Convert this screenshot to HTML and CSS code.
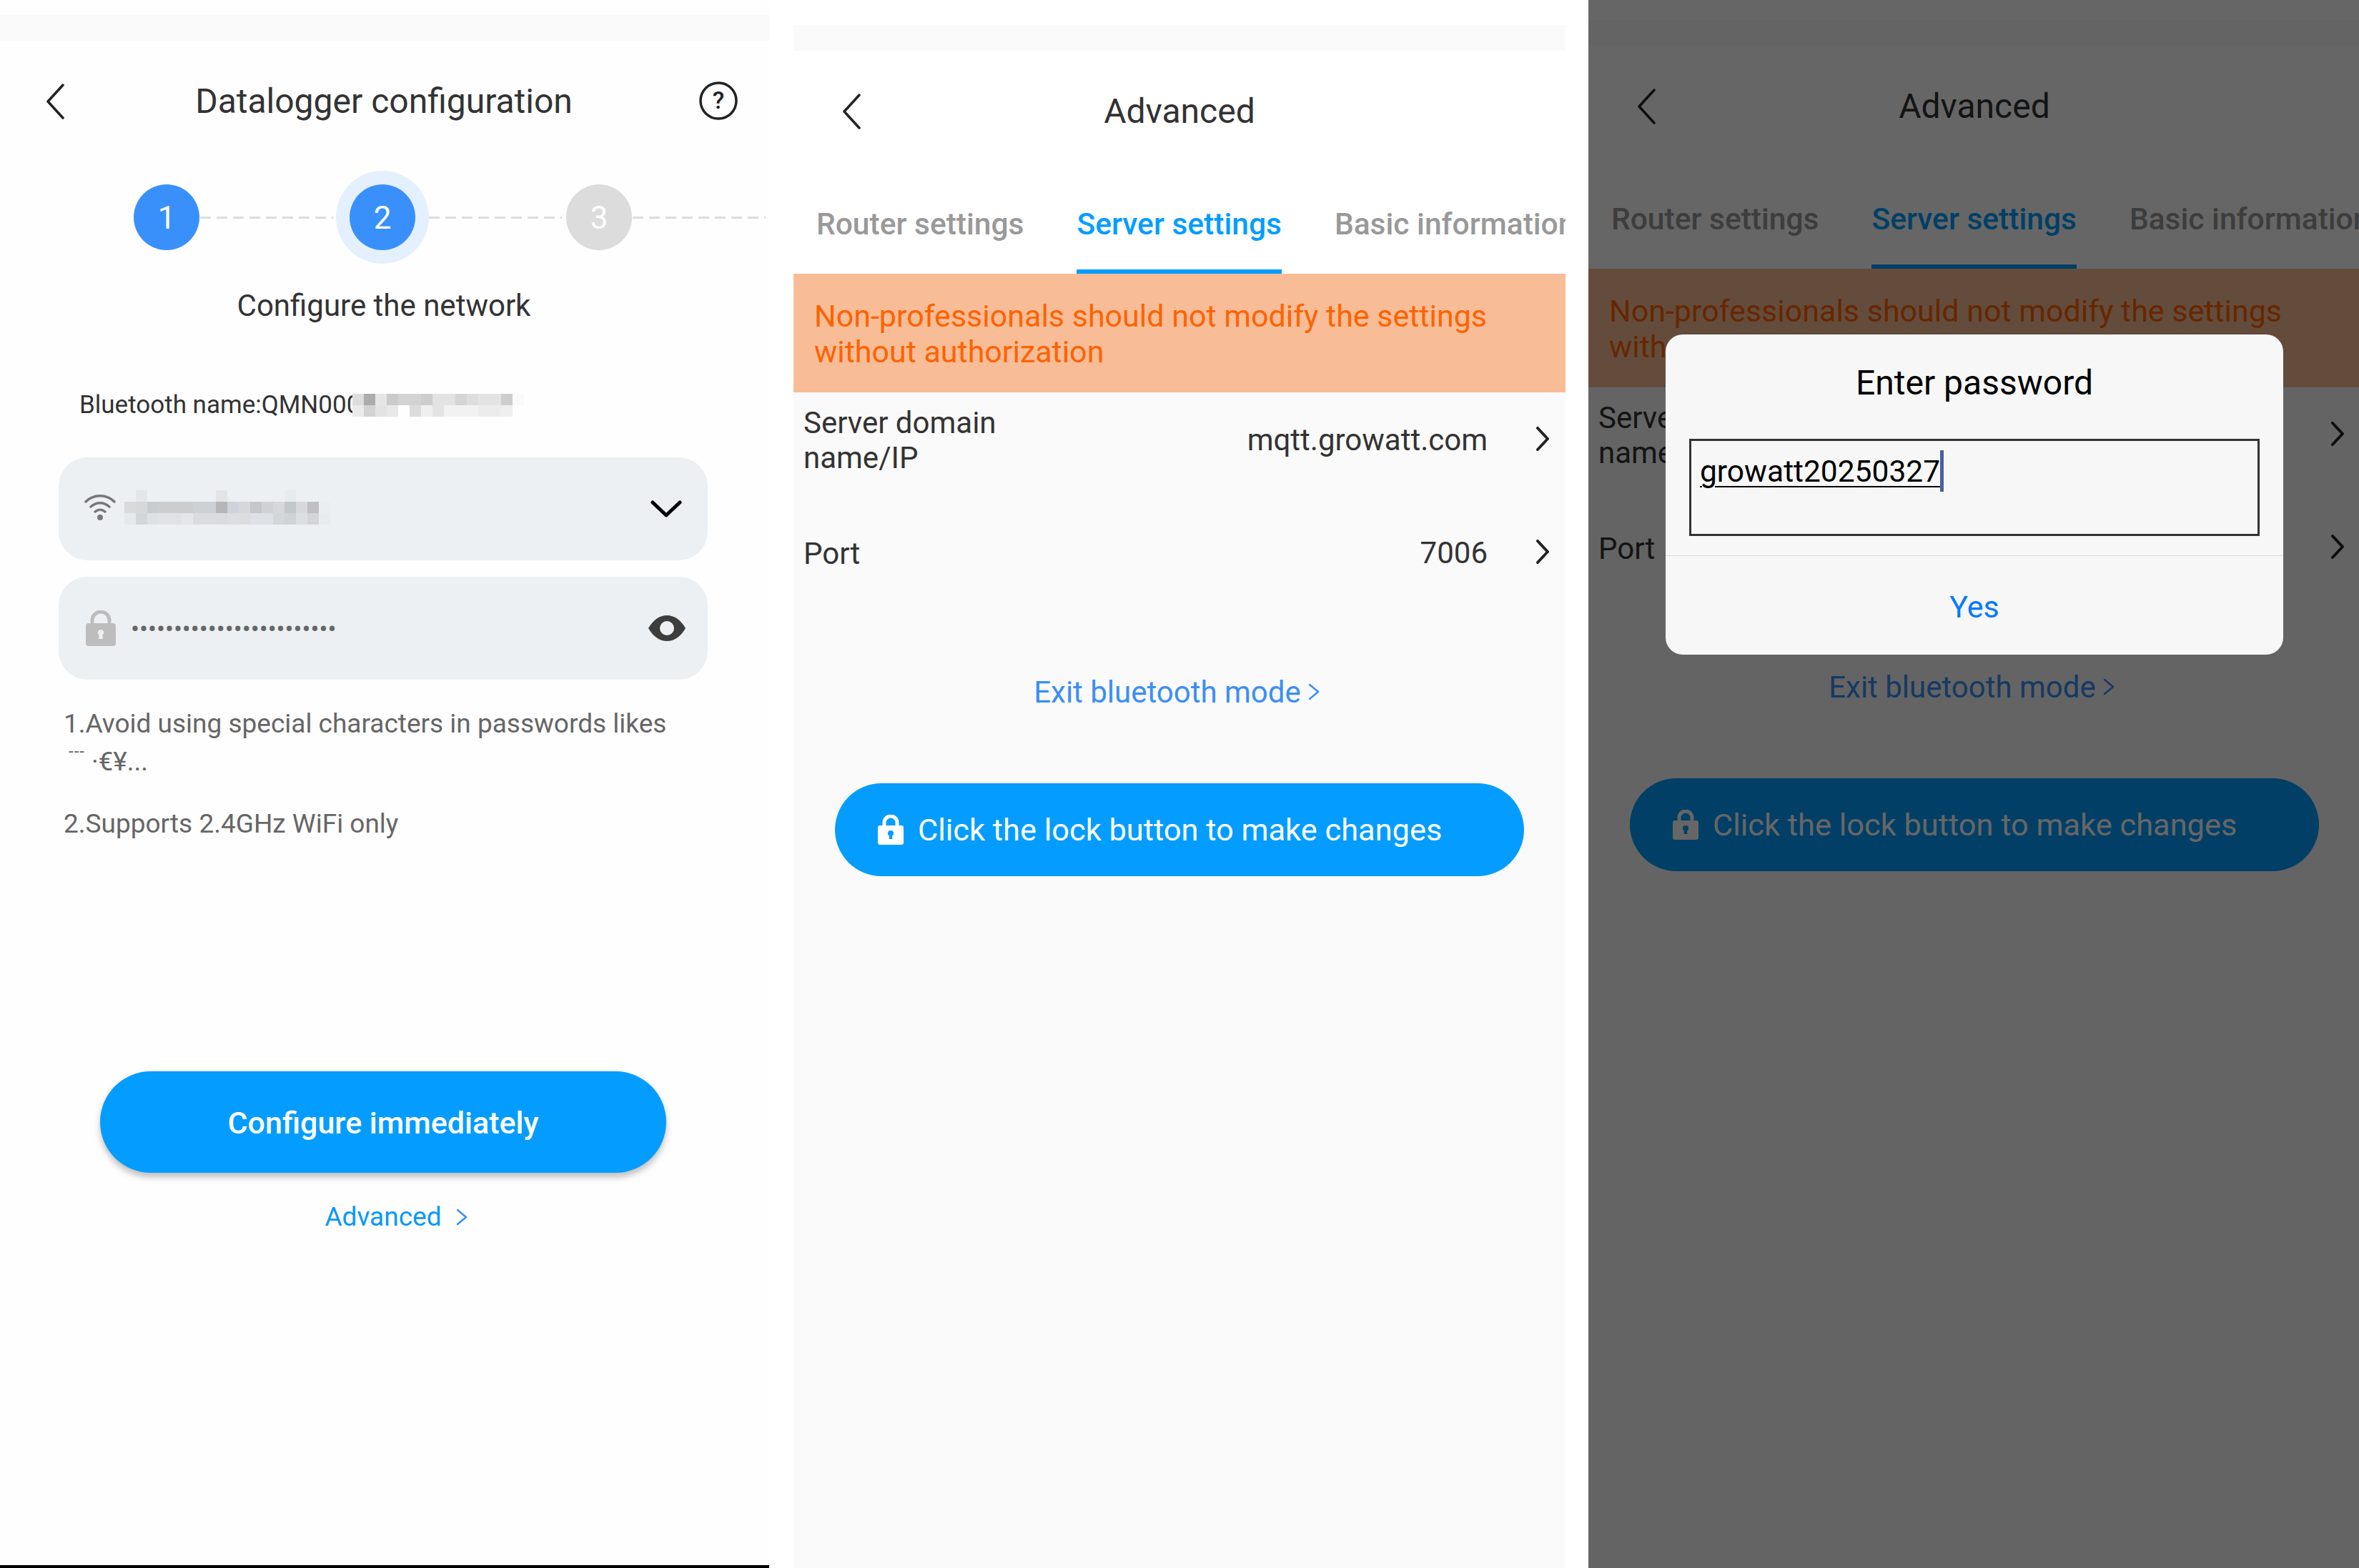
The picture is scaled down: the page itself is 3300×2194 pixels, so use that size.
FILE: index.html
```html
<!DOCTYPE html>
<html lang="en">
  <head>
    <meta charset="UTF-8" />
    <title>Datalogger configuration</title>
    <link rel="stylesheet" href="styles.css">
  </head>
  <body>
    <div class="screens">
      <!-- step 2 of the datalogger wizard -->
      <section class="screen config">
        <div class="status-strip"></div>
        <header class="topbar config-topbar">
          <svg class="back" viewBox="0 0 26 50"><path d="M24 2 3 25l21 23" /></svg>
          <h1>Datalogger configuration</h1>
          <svg class="help" viewBox="0 0 54 54">
            <circle cx="27" cy="27" r="25" />
            <text x="27" y="38" text-anchor="middle">?</text>
          </svg>
        </header>

        <div class="steps">
          <span class="step done">1</span>
          <span class="dash dash-a"></span>
          <span class="halo"><span class="step done">2</span></span>
          <span class="dash dash-b"></span>
          <span class="step todo">3</span>
          <span class="dash dash-c"></span>
        </div>
        <p class="step-label">Configure the network</p>

        <p class="bt-name">
          Bluetooth name:QMN000
          <svg class="bt-mosaic" width="240" height="32" shape-rendering="crispEdges">
            <rect x="0" y="0" width="16" height="16" fill="#ddd" />
            <rect x="16" y="0" width="16" height="16" fill="#adadad" />
            <rect x="32" y="0" width="16" height="16" fill="#e6e6e6" />
            <rect x="48" y="0" width="16" height="16" fill="#cacaca" />
            <rect x="64" y="0" width="32" height="16" fill="#d3d3d3" />
            <rect x="96" y="0" width="16" height="16" fill="#cdcdcd" />
            <rect x="112" y="0" width="32" height="16" fill="#e3e3e3" />
            <rect x="144" y="0" width="16" height="16" fill="#d5d5d5" />
            <rect x="160" y="0" width="16" height="16" fill="#dedede" />
            <rect x="176" y="0" width="32" height="16" fill="#e3e3e3" />
            <rect x="208" y="0" width="16" height="16" fill="#cdcdcd" />
            <rect x="224" y="0" width="16" height="16" fill="#fafafa" />
            <rect x="0" y="16" width="16" height="16" fill="#ebebeb" />
            <rect x="16" y="16" width="16" height="16" fill="#d3d3d3" />
            <rect x="32" y="16" width="16" height="16" fill="#e3e3e3" />
            <rect x="48" y="16" width="16" height="16" fill="#e8e8e8" />
            <rect x="64" y="16" width="16" height="16" fill="#fefefe" />
            <rect x="80" y="16" width="16" height="16" fill="#dcdcdc" />
            <rect x="96" y="16" width="16" height="16" fill="#efefef" />
            <rect x="112" y="16" width="16" height="16" fill="#e3e3e3" />
            <rect x="128" y="16" width="48" height="16" fill="#f2f2f2" />
            <rect x="176" y="16" width="32" height="16" fill="#ececec" />
            <rect x="208" y="16" width="16" height="16" fill="#efefef" />
          </svg>
        </p>

        <div class="field">
          <svg class="wifi" viewBox="0 0 44 40">
            <path d="M2 13C13 2 31 2 42 13" />
            <path d="M9 20c8-7 18-7 26 0" />
            <path d="M15 27c5-4 9-4 14 0" />
            <circle cx="22" cy="35" r="4" />
          </svg>
          <svg class="ssid-mosaic" width="288" height="48" shape-rendering="crispEdges">
            <rect x="16" y="0" width="16" height="16" fill="#e3e7ea" />
            <rect x="128" y="0" width="16" height="16" fill="#e3e4e6" />
            <rect x="224" y="0" width="16" height="16" fill="#e7ebee" />
            <rect x="0" y="16" width="16" height="16" fill="#d9dadb" />
            <rect x="16" y="16" width="16" height="16" fill="#d5d9da" />
            <rect x="32" y="16" width="16" height="16" fill="#c8ccd0" />
            <rect x="48" y="16" width="48" height="16" fill="#cbcdcf" />
            <rect x="96" y="16" width="32" height="16" fill="#cdd1d4" />
            <rect x="128" y="16" width="16" height="16" fill="#b5b6b8" />
            <rect x="144" y="16" width="16" height="16" fill="#cdd3d8" />
            <rect x="160" y="16" width="16" height="16" fill="#d4d8da" />
            <rect x="176" y="16" width="16" height="16" fill="#c5c6c8" />
            <rect x="192" y="16" width="16" height="16" fill="#ced2d4" />
            <rect x="208" y="16" width="16" height="16" fill="#d6d8da" />
            <rect x="224" y="16" width="16" height="16" fill="#c3c8ca" />
            <rect x="240" y="16" width="16" height="16" fill="#d6d8da" />
            <rect x="256" y="16" width="16" height="16" fill="#c0c0c2" />
            <rect x="272" y="16" width="16" height="16" fill="#ebeef0" />
            <rect x="0" y="32" width="16" height="16" fill="#e6e9ec" />
            <rect x="16" y="32" width="16" height="16" fill="#d3d7d8" />
            <rect x="32" y="32" width="16" height="16" fill="#dde1e4" />
            <rect x="48" y="32" width="16" height="16" fill="#dfe3e4" />
            <rect x="64" y="32" width="16" height="16" fill="#e0e2e4" />
            <rect x="80" y="32" width="16" height="16" fill="#e3e7e8" />
            <rect x="96" y="32" width="32" height="16" fill="#dadcde" />
            <rect x="128" y="32" width="16" height="16" fill="#d8dcdf" />
            <rect x="144" y="32" width="16" height="16" fill="#dcdee0" />
            <rect x="160" y="32" width="16" height="16" fill="#dadcde" />
            <rect x="176" y="32" width="32" height="16" fill="#dde0e4" />
            <rect x="208" y="32" width="16" height="16" fill="#d3d7da" />
            <rect x="224" y="32" width="16" height="16" fill="#d0d3d6" />
            <rect x="240" y="32" width="16" height="16" fill="#dadfe3" />
            <rect x="256" y="32" width="16" height="16" fill="#d3d5d7" />
            <rect x="272" y="32" width="16" height="16" fill="#e9ecef" />
          </svg>
          <svg class="field-end chevron-down" viewBox="0 0 44 24"><path d="M3 3l19 18L41 3" /></svg>
        </div>

        <div class="field password">
          <svg class="lock lock-grey" viewBox="0 0 42 50">
            <path class="shackle" d="M9 22V14a12 12 0 0 1 24 0v8" />
            <path d="M4 18h34a4 4 0 0 1 4 4v24a4 4 0 0 1-4 4H4a4 4 0 0 1-4-4V22a4 4 0 0 1 4-4z" />
            <circle class="keyhole" cx="21" cy="31" r="4" />
            <path class="keyhole" d="M19 32h4l1 8h-6z" />
          </svg>
          <span class="dots">••••••••••••••••••••••••</span>
          <svg class="field-end eye" viewBox="0 0 52 36">
            <path d="M0 18C7 6 16 0 26 0s19 6 26 18c-7 12-16 18-26 18S7 30 0 18z" />
            <circle cx="26" cy="18" r="10" />
          </svg>
        </div>

        <p class="hint hint-first">1.Avoid using special characters in passwords likes</p>
        <p class="hint hint-second"><span class="hint-mark">---</span><span class="hint-chars">·€¥...</span></p>
        <p class="hint hint-third">2.Supports 2.4GHz WiFi only</p>

        <div class="primary-btn config-btn">Configure immediately</div>
        <div class="advanced-link">
          Advanced
          <svg class="small-chevron" viewBox="0 0 16 24"><path d="M2 2l12 10L2 22" /></svg>
        </div>
        <div class="home-bar"></div>
      </section>

      <!-- advanced settings -->
      <section class="screen advanced">
        <div class="advanced-body">
          <div class="status-strip"></div>
          <header class="topbar">
            <svg class="back" viewBox="0 0 26 50"><path d="M24 2 3 25l21 23" /></svg>
            <h1>Advanced</h1>
          </header>
          <nav class="tabs">
            <span class="tab">Router settings</span>
            <span class="tab active">Server settings</span>
            <span class="tab">Basic information</span>
          </nav>
          <p class="warning">Non-professionals should not modify the settings<br />without authorization</p>
          <div class="row">
            <span class="row-label">Server domain<br />name/IP</span>
            <span class="row-value">mqtt.growatt.com</span>
            <svg class="row-chevron" viewBox="0 0 20 34"><path d="M3 2l14 15L3 32" /></svg>
          </div>
          <div class="row row-port">
            <span class="row-label">Port</span>
            <span class="row-value">7006</span>
            <svg class="row-chevron" viewBox="0 0 20 34"><path d="M3 2l14 15L3 32" /></svg>
          </div>
          <div class="exit-link">
            Exit bluetooth mode
            <svg class="small-chevron" viewBox="0 0 16 24"><path d="M2 2l12 10L2 22" /></svg>
          </div>
          <div class="primary-btn lock-btn">
            <svg class="lock lock-white" viewBox="0 0 36 42">
              <path class="shackle" d="M9 18V11a9 9 0 0 1 18 0v7" />
              <path d="M3 15h30a3 3 0 0 1 3 3v21a3 3 0 0 1-3 3H3a3 3 0 0 1-3-3V18a3 3 0 0 1 3-3z" />
              <circle class="keyhole" cx="18" cy="26" r="4" />
              <path class="keyhole" d="M16.500 27h3l1 7h-5z" />
            </svg>
            Click the lock button to make changes
          </div>
        </div>
      </section>

      <!-- same screen behind the password prompt -->
      <section class="screen advanced locked">
        <div class="advanced-body">
          <div class="status-strip"></div>
          <header class="topbar">
            <svg class="back" viewBox="0 0 26 50"><path d="M24 2 3 25l21 23" /></svg>
            <h1>Advanced</h1>
          </header>
          <nav class="tabs">
            <span class="tab">Router settings</span>
            <span class="tab active">Server settings</span>
            <span class="tab">Basic information</span>
          </nav>
          <p class="warning">Non-professionals should not modify the settings<br />without authorization</p>
          <div class="row">
            <span class="row-label">Server domain<br />name/IP</span>
            <span class="row-value">mqtt.growatt.com</span>
            <svg class="row-chevron" viewBox="0 0 20 34"><path d="M3 2l14 15L3 32" /></svg>
          </div>
          <div class="row row-port">
            <span class="row-label">Port</span>
            <span class="row-value">7006</span>
            <svg class="row-chevron" viewBox="0 0 20 34"><path d="M3 2l14 15L3 32" /></svg>
          </div>
          <div class="exit-link">
            Exit bluetooth mode
            <svg class="small-chevron" viewBox="0 0 16 24"><path d="M2 2l12 10L2 22" /></svg>
          </div>
          <div class="primary-btn lock-btn">
            <svg class="lock lock-white" viewBox="0 0 36 42">
              <path class="shackle" d="M9 18V11a9 9 0 0 1 18 0v7" />
              <path d="M3 15h30a3 3 0 0 1 3 3v21a3 3 0 0 1-3 3H3a3 3 0 0 1-3-3V18a3 3 0 0 1 3-3z" />
              <circle class="keyhole" cx="18" cy="26" r="4" />
              <path class="keyhole" d="M16.500 27h3l1 7h-5z" />
            </svg>
            Click the lock button to make changes
          </div>
        </div>
        <div class="scrim"></div>
        <div class="dialog">
          <h2>Enter password</h2>
          <div class="dialog-input"><span class="typed">growatt20250327</span><span class="caret"></span></div>
          <div class="dialog-action">Yes</div>
        </div>
      </section>
    </div>
  </body>
</html>
```

FILE: styles.css
```css
* {
  box-sizing: border-box;
}

html,
body {
  margin: 0;
  height: 100%;
  background-color: #fff;
  overflow: hidden;
}

body {
  font-family: Roboto, "Noto Sans", sans-serif;
  color: #333;
}

h1,
h2,
p {
  margin: 0;
  font-weight: 400;
}

svg {
  display: block;
  flex: none;
}

.screens {
  display: flex;
  height: 2194px;
}

.screen {
  position: relative;
  height: 100%;
  flex: none;
  overflow: hidden;
}

.status-strip {
  height: 36px;
  background-color: #fafafa;
}

/* header */
.topbar {
  display: grid;
  grid-template-columns: 1fr auto 1fr;
  align-items: center;
  height: 170px;
  padding: 0 68px;
}

.topbar h1 {
  grid-column: 2;
  grid-row: 1;
  font-size: 48px;
  line-height: 60px;
}

.back {
  grid-column: 1;
  grid-row: 1;
  width: 26px;
  height: 50px;
  fill: none;
  stroke: #222;
  stroke-width: 3.5;
  stroke-linecap: round;
  stroke-linejoin: round;
}

/* first screen */
.config {
  display: flex;
  flex-direction: column;
  width: 1076px;
  padding-top: 21px;
  background-color: #fefefe;
}

.config-topbar {
  padding: 0 46px 0 44px;
}

.config-topbar .back {
  margin-left: 20px;
}

.help {
  grid-column: 3;
  grid-row: 1;
  justify-self: end;
  width: 54px;
  height: 54px;
  margin: -2px -2px 0 0;
  fill: none;
  stroke: #222;
  stroke-width: 3.5;
}

.help text {
  fill: #222;
  stroke: none;
  font-size: 34px;
  font-weight: 500;
}

.steps {
  display: flex;
  align-items: center;
  height: 130px;
  margin-top: 12px;
  padding-left: 187px;
}

.step {
  display: flex;
  align-items: center;
  justify-content: center;
  width: 92px;
  height: 92px;
  flex: none;
  padding-top: 2px;
  border-radius: 50%;
  color: #fff;
  font-size: 44px;
}

.step.done {
  background-color: #3990fb;
}

.step.todo {
  background-color: #dcdcdc;
}

.halo {
  display: flex;
  align-items: center;
  justify-content: center;
  width: 130px;
  height: 130px;
  border-radius: 50%;
  background-color: #e4f0fe;
}

.dash {
  height: 3px;
  flex: none;
  background-image: repeating-linear-gradient(90deg, #ddd 0 15px, transparent 15px 23px);
}

.dash-a {
  width: 186px;
  margin: 0 4px 0 1px;
}

.dash-b {
  width: 186px;
  margin-right: 6px;
}

.dash-c {
  width: 186px;
  margin-left: 1px;
}

.step-label {
  margin: 34px 2px 0 0;
  font-size: 42px;
  line-height: 50px;
  text-align: center;
}

.bt-name {
  position: relative;
  margin: 89px 0 0 111px;
  font-size: 35px;
  line-height: 50px;
}

.bt-mosaic {
  position: absolute;
  left: 382px;
  top: 9px;
}

.field {
  display: flex;
  align-items: center;
  height: 144px;
  margin: 48px 86px 0 82px;
  padding: 0 30px 0 36px;
  border-radius: 40px;
  background-color: #ecf0f3;
}

.field.password {
  margin-top: 23px;
}

.wifi {
  width: 44px;
  height: 40px;
  margin-top: -6px;
  fill: none;
  stroke: #777;
  stroke-width: 3.5;
  stroke-linecap: round;
}

.wifi circle {
  fill: #777;
  stroke: none;
}

.ssid-mosaic {
  margin: -4px 0 0 12px;
}

.field-end {
  margin-left: auto;
}

.chevron-down {
  width: 44px;
  height: 24px;
  margin-right: 6px;
  fill: none;
  stroke: #000;
  stroke-width: 5;
  stroke-linecap: round;
  stroke-linejoin: round;
}

.lock {
  fill: #bdbdbd;
}

.lock .shackle {
  fill: none;
  stroke: #bdbdbd;
  stroke-width: 5;
}

.lock .keyhole {
  fill: #ecf0f3;
}

.lock-grey {
  width: 42px;
  height: 50px;
  margin-left: 2px;
}

.dots {
  margin: 2px 0 0 21px;
  color: #666;
  font-size: 35.5px;
  line-height: 30px;
}

.eye {
  width: 52px;
  height: 36px;
  margin-right: 1px;
  fill: #3d3d3d;
}

.eye circle {
  fill: #ecf0f3;
}

.hint {
  margin-left: 89px;
  color: #666;
  font-size: 37px;
  line-height: 50px;
}

.hint-first {
  margin-top: 37px;
}

.hint-second {
  display: flex;
  align-items: flex-start;
  height: 50px;
  margin-left: 96px;
  padding-top: 3px;
}

.hint-mark {
  font-size: 24px;
  line-height: 20px;
  letter-spacing: 1px;
}

.hint-chars {
  margin-left: 9px;
}

.hint-third {
  margin-top: 40px;
}

.primary-btn {
  display: flex;
  align-items: center;
  justify-content: center;
  border-radius: 71px;
  background-color: #049dff;
  color: #fff;
  font-size: 43px;
}

.config-btn {
  height: 142px;
  margin: 321px 144px 0 140px;
  padding-top: 2px;
  font-weight: 500;
  box-shadow: 0 6px 10px rgba(0, 0, 0, 0.25);
}

.advanced-link {
  display: flex;
  align-items: center;
  justify-content: center;
  gap: 20px;
  margin: 37px 0 0 32px;
  color: #0a98fb;
  font-size: 37px;
  line-height: 50px;
}

.small-chevron {
  width: 16px;
  height: 24px;
  fill: none;
  stroke: #3b8ef5;
  stroke-width: 2.5;
  stroke-linecap: round;
  stroke-linejoin: round;
}

.home-bar {
  height: 4px;
  margin-top: auto;
  background-color: #000;
}

/* second and third screens */
.advanced {
  width: 1080px;
  margin-left: 34px;
  background-color: #fff;
}

.advanced-body {
  width: 1080px;
  height: 2202px;
  border-top: 35px solid #fff;
  background-color: #fafafa;
}

.advanced .topbar {
  background-color: #fff;
}

.tabs {
  display: flex;
  gap: 74px;
  height: 142px;
  padding-left: 32px;
  overflow: hidden;
  background-color: #fff;
  white-space: nowrap;
}

.tab {
  flex: none;
  height: 142px;
  padding-top: 50px;
  color: #999;
  font-size: 42.5px;
  font-weight: 500;
  line-height: 46px;
}

.tab.active {
  border-bottom: 6px solid #049dff;
  color: #049dff;
}

.warning {
  display: flex;
  align-items: center;
  height: 166px;
  padding: 2px 0 0 29px;
  background-color: #f8bd96;
  color: #ff6200;
  font-size: 43px;
  line-height: 50px;
}

.row {
  display: flex;
  align-items: center;
  height: 134px;
  padding: 0 22px 0 14px;
  font-size: 42px;
  line-height: 49px;
}

.row-port {
  margin-top: 24px;
}

.row-value {
  margin: -2px 0 0 auto;
}

.row-chevron {
  width: 20px;
  height: 34px;
  margin: -5px 0 0 67px;
  fill: none;
  stroke: #222;
  stroke-width: 4;
  stroke-linecap: round;
  stroke-linejoin: round;
}

.exit-link {
  display: flex;
  align-items: center;
  justify-content: center;
  gap: 10px;
  height: 50px;
  margin-top: 102px;
  padding-right: 8px;
  color: #3b8ef5;
  font-size: 42px;
}

.lock-btn {
  gap: 20px;
  justify-content: flex-start;
  height: 130px;
  margin: 103px 58px 0;
  padding-left: 60px;
  font-size: 43.4px;
}

.lock-white {
  width: 36px;
  height: 42px;
  fill: #fff;
}

.lock-white .shackle {
  stroke: #fff;
}

.lock-white .keyhole {
  fill: #049dff;
}

/* password prompt */
.locked {
  width: 1078px;
  margin-left: 32px;
}

.locked .advanced-body {
  margin-top: -7px;
}

.scrim {
  position: absolute;
  inset: 0;
  background-color: rgba(0, 0, 0, 0.6);
}

.dialog {
  position: absolute;
  left: 108px;
  top: 468px;
  width: 864px;
  height: 448px;
  border-radius: 24px;
  background-color: #f7f7f7;
}

.dialog h2 {
  padding-top: 38px;
  color: #000;
  font-size: 48px;
  line-height: 60px;
  text-align: center;
}

.dialog-input {
  display: flex;
  align-items: flex-start;
  height: 136px;
  margin: 48px 33px 0;
  padding: 13px 0 0 12px;
  border: 3px solid #333;
  color: #000;
  font-size: 42.5px;
  line-height: 60px;
}

.typed {
  text-decoration: underline;
  text-underline-offset: 6px;
  text-decoration-thickness: 2px;
}

.caret {
  width: 5px;
  height: 58px;
  flex: none;
  background-color: #4a5f9f;
}

.dialog-action {
  height: 139px;
  margin-top: 27px;
  padding-top: 2px;
  border-top: 1px solid #ddd;
  color: #007aff;
  font-size: 43px;
  line-height: 139px;
  text-align: center;
}
```
